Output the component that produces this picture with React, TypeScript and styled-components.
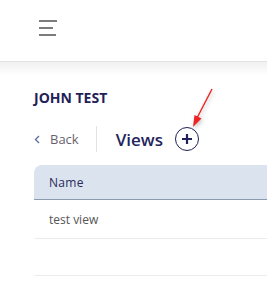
import React from "react";
import styled, { createGlobalStyle } from "styled-components";

const Global = createGlobalStyle`
  body {
    margin: 0;
    background: #fff;
    font-family: "Open Sans", "Liberation Sans", sans-serif;
  }
`;

const Page = styled.div`
  position: relative;
  width: 267px;
  height: 288px;
  overflow: hidden;
`;

const Header = styled.header`
  height: 61px;
  border-bottom: 1px solid #e2e2e2;
  display: flex;
  align-items: center;
  padding-left: 39px;
`;

const Burger = styled.button`
  display: flex;
  flex-direction: column;
  gap: 5px;
  padding: 0;
  margin-top: -6px;
  border: none;
  background: none;
  span {
    display: block;
    height: 2px;
    background: #7c7c7c;
  }
`;

const Shade = styled.div`
  height: 14px;
  background: linear-gradient(#f1f1f1, #fff);
`;

const Content = styled.main`
  padding: 12px 0 0 34px;
`;

const Client = styled.h2`
  margin: 0;
  font-size: 14px;
  font-weight: 700;
  color: #1f2158;
`;

const Toolbar = styled.div`
  display: flex;
  align-items: center;
  height: 26px;
  margin-top: 19px;
`;

const BackLink = styled.a`
  display: flex;
  align-items: center;
  gap: 10px;
  font-size: 13px;
  color: #6a5f6e;
  padding-right: 17px;
  border-right: 1px solid #e3e3e3;
  height: 100%;
  svg {
    margin-top: 1px;
  }
`;

const Title = styled.h1`
  margin: 0 0 0 19px;
  font-size: 17px;
  font-weight: 600;
  color: #23255c;
`;

const AddButton = styled.button`
  width: 24px;
  height: 24px;
  margin-left: 12px;
  padding: 0;
  border: 1.5px solid #1f2158;
  border-radius: 50%;
  background: #fff;
  display: flex;
  align-items: center;
  justify-content: center;
`;

const Table = styled.table`
  margin-top: 13px;
  width: 240px;
  border-collapse: collapse;
  font-size: 12px;
`;

const Th = styled.th`
  background: #dbe4ee;
  text-align: left;
  font-weight: 400;
  color: #2a2a5c;
  height: 34px;
  padding: 0 0 0 15px;
  border-bottom: 1px solid #8a9bb0;
  border-top-left-radius: 8px;
  letter-spacing: 0.3px;
`;

const Td = styled.td<{ $h: number }>`
  height: ${(p) => p.$h}px;
  padding: 0 0 0 15px;
  color: #555;
  border-bottom: 1px solid #ececec;
`;

const Arrow = styled.svg`
  position: absolute;
  left: 188px;
  top: 86px;
  filter: drop-shadow(1px 2px 2px rgba(0, 0, 0, 0.25));
`;

export default function App() {
  return (
    <Page>
      <Global />
      <Header>
        <Burger aria-label="menu">
          <span style={{ width: 18 }} />
          <span style={{ width: 14 }} />
          <span style={{ width: 17 }} />
        </Burger>
      </Header>
      <Shade />
      <Content>
        <Client>JOHN TEST</Client>
        <Toolbar>
          <BackLink>
            <svg width="6" height="9" viewBox="0 0 6 9">
              <path d="M5 1 L1.5 4.5 L5 8" fill="none" stroke="#5b6aa0" strokeWidth="1.3" />
            </svg>
            Back
          </BackLink>
          <Title>Views</Title>
          <AddButton aria-label="add view">
            <svg width="12" height="12" viewBox="0 0 12 12">
              <path d="M6 1 V11 M1 6 H11" stroke="#1f2158" strokeWidth="2.2" />
            </svg>
          </AddButton>
        </Toolbar>
        <Table>
          <thead>
            <tr>
              <Th>Name</Th>
            </tr>
          </thead>
          <tbody>
            <tr>
              <Td $h={38}>test view</Td>
            </tr>
            <tr>
              <Td $h={36} />
            </tr>
          </tbody>
        </Table>
      </Content>
      <Arrow width="30" height="44" viewBox="0 0 30 44">
        <path d="M24 3 L9 32" stroke="#ee2222" strokeWidth="1.4" />
        <path d="M5 41 L6.5 29 L13.5 32.5 Z" fill="#ee2222" />
      </Arrow>
    </Page>
  );
}
